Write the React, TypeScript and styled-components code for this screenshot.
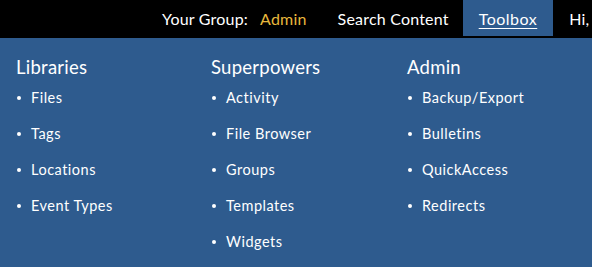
import React from "react";
import styled, { createGlobalStyle } from "styled-components";

const Global = createGlobalStyle`
  html, body { margin: 0; padding: 0; background: #2e5b8e; }
  body { font-family: Lato, "Open Sans", sans-serif; -webkit-font-smoothing: antialiased; }
`;

const Page = styled.div`
  width: 592px;
  height: 267px;
  overflow: hidden;
  display: flex;
  flex-direction: column;
`;

const TopBar = styled.nav`
  height: 38px;
  background: #000;
  display: flex;
  align-items: flex-start;
  padding-left: 162px;
  white-space: nowrap;
  overflow: hidden;
  flex-shrink: 0;
`;

const NavItem = styled.a<{ $active?: boolean }>`
  height: 36px;
  display: flex;
  align-items: center;
  padding: 0 16px;
  font-size: 16px;
  letter-spacing: ${(p) => (p.$active ? "0.5px" : "0.2px")};
  color: #fff;
  text-decoration: ${(p) => (p.$active ? "underline" : "none")};
  text-underline-offset: 3px;
  text-decoration-thickness: 1px;
  background: ${(p) => (p.$active ? "#2e5b8e" : "transparent")};
  &:first-child { padding-left: 0; padding-right: 15px; }
  &:nth-child(2) { padding-right: 14px; }
`;

const Highlight = styled.span`
  color: #e8b83c;
  margin-left: 12px;
`;

const Panel = styled.div`
  flex: 1;
  background: #2e5b8e;
  padding: 16px 16px 0;
  display: grid;
  grid-template-columns: 195px 196px 1fr;
  align-items: start;
`;

const Column = styled.section`
  display: flex;
  flex-direction: column;
`;

const Heading = styled.h3`
  margin: 0 0 8px;
  font-size: 18.5px;
  letter-spacing: 0.25px;
  font-weight: 400;
  color: #fff;
  line-height: 26px;
`;

const List = styled.ul`
  list-style: none;
  margin: 0;
  padding: 0;
`;

const Item = styled.li`
  position: relative;
  padding-left: 15px;
  height: 36px;
  line-height: 20px;
  font-size: 14.5px;
  letter-spacing: 0.5px;
  color: #fff;
  &::before {
    content: "";
    position: absolute;
    left: 1px;
    top: 8px;
    width: 4px;
    height: 4px;
    border-radius: 50%;
    background: #fff;
  }
`;

const columns = [
  { title: "Libraries", items: ["Files", "Tags", "Locations", "Event Types"] },
  { title: "Superpowers", items: ["Activity", "File Browser", "Groups", "Templates", "Widgets"] },
  { title: "Admin", items: ["Backup/Export", "Bulletins", "QuickAccess", "Redirects"] },
];

export default function App() {
  return (
    <Page>
      <Global />
      <TopBar>
        <NavItem>
          Your Group:<Highlight>Admin</Highlight>
        </NavItem>
        <NavItem>Search Content</NavItem>
        <NavItem $active>Toolbox</NavItem>
        <NavItem>Hi,</NavItem>
      </TopBar>
      <Panel>
        {columns.map((c) => (
          <Column key={c.title}>
            <Heading>{c.title}</Heading>
            <List>
              {c.items.map((i) => (
                <Item key={i}>{i}</Item>
              ))}
            </List>
          </Column>
        ))}
      </Panel>
    </Page>
  );
}
